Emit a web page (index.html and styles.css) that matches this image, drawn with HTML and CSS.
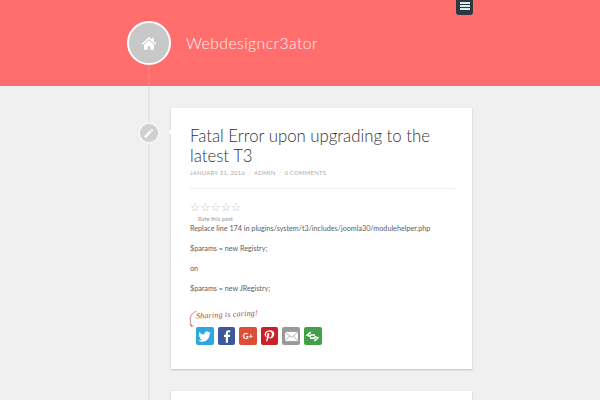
FILE: index.html
```html
<!DOCTYPE html>
<html lang="en">
<head>
<meta charset="utf-8">
<title>Webdesigncr3ator</title>
<link rel="stylesheet" href="styles.css">
</head>
<body>
<header class="site-header">
  <div class="brand">
    <span class="avatar">
      <svg viewBox="0 0 24 24" width="16" height="16"><path fill="#fff" d="M12 3 1 13l1.400 1.500L12 6l9.600 8.500L23 13l-4-3.600V4h-3v2.700z"/><path fill="#fff" d="M12 8 4.500 14.500V22H10v-5h4v5h5.500v-7.500z"/></svg>
    </span>
    <span class="site-name">Webdesigncr3ator</span>
  </div>
  <button class="menu-toggle" aria-label="Menu"><i></i><i></i><i></i></button>
</header>
<main class="timeline">
  <article class="post">
    <span class="post-badge">
      <svg viewBox="0 0 24 24" width="12" height="12"><path fill="#fff" d="M3 17.500V21h3.500L17 10.500 13.500 7zM19.700 7.800a1.500 1.500 0 0 0 0-2.100l-1.400-1.400a1.500 1.500 0 0 0-2.100 0L14.700 5.800l3.500 3.500z"/></svg>
    </span>
    <h1 class="post-title">Fatal Error upon upgrading to the latest T3</h1>
    <div class="post-meta"><span>January 31, 2016</span><em>/</em><span>Admin</span><em>/</em><span>0 Comments</span></div>
    <div class="rating">
      <div class="stars">☆☆☆☆☆</div>
      <div class="rate-label">Rate this post</div>
    </div>
    <p class="first">Replace line 174 in plugins/system/t3/includes/joomla30/modulehelper.php</p>
    <p>$params = new Registry;</p>
    <p>on</p>
    <p>$params = new JRegistry;</p>
    <div class="share">
      <div class="share-note">
        <svg class="arrow" viewBox="0 0 12 30" width="8" height="20"><path d="M11 2C5 4 1 9 2 17c.3 3 1 5 2 7M1 21l3 4 3-2" fill="none" stroke="#b5483c" stroke-width="1"/></svg>
        <span>Sharing is caring!</span>
      </div>
      <div class="share-icons">
        <a class="s-tw"><svg viewBox="0 0 24 24" width="15" height="15"><path fill="#fff" d="M22 5.900c-.7.3-1.500.5-2.400.6.900-.5 1.500-1.300 1.800-2.300-.8.5-1.700.8-2.600 1a4.100 4.100 0 0 0-7 3.700A11.600 11.600 0 0 1 3.400 4.700a4.100 4.100 0 0 0 1.300 5.500c-.7 0-1.300-.2-1.900-.5 0 2 1.400 3.700 3.300 4.100-.6.200-1.200.2-1.800.1.500 1.600 2 2.800 3.800 2.800A8.300 8.300 0 0 1 2 18.400a11.700 11.700 0 0 0 18-10.400c.8-.6 1.500-1.300 2-2.100z"/></svg></a>
        <a class="s-fb"><svg viewBox="0 0 24 24" width="16" height="16"><path fill="#fff" d="M15 22v-8.500h2.800l.4-3.300H15V8.100c0-1 .3-1.600 1.600-1.600h1.700V3.600c-.3 0-1.300-.1-2.400-.1-2.500 0-4.200 1.500-4.200 4.300v2.400H9v3.300h2.700V22z"/></svg></a>
        <a class="s-gp"><span>G+</span></a>
        <a class="s-pi"><svg viewBox="0 0 24 24" width="15" height="15"><path fill="#fff" d="M12.300 2C7 2 4.300 5.600 4.300 8.700c0 1.800.7 3.500 2.200 4.100.3.100.5 0 .6-.3l.2-.9c.1-.3 0-.4-.2-.6-.4-.5-.7-1.100-.7-2 0-2.600 2-4.900 5.100-4.900 2.800 0 4.300 1.700 4.300 4 0 3-1.300 5.500-3.300 5.500-1.100 0-1.900-.9-1.600-2 .3-1.300.9-2.800.9-3.700 0-.9-.5-1.600-1.500-1.600-1.200 0-2.100 1.200-2.100 2.800 0 1 .3 1.700.3 1.700l-1.400 5.900c-.4 1.800-.1 3.900 0 4.100 0 .1.200.2.300.1.100-.2 1.700-2.100 2.200-4l.9-3.300c.4.800 1.600 1.500 2.900 1.500 3.800 0 6.300-3.400 6.300-8C20 5 17 2 12.300 2z"/></svg></a>
        <a class="s-em"><svg viewBox="0 0 24 24" width="17" height="17"><path fill="#fff" d="M3 5.500h18v13H3z"/><path fill="none" stroke="#999" stroke-width="1" d="M3 6l9 7 9-7M3 18l6.500-7M21 18l-6.500-7"/></svg></a>
        <a class="s-mo"><svg viewBox="0 0 24 24" width="15" height="15"><path fill="none" stroke="#fff" stroke-width="2.600" d="M9 5 3.500 10 9 12M15 12l5.500 2L15 19M8 9.500h8M8 14.500h8"/></svg></a>
      </div>
    </div>
  </article>
  <article class="post post-next"></article>
</main>
</body>
</html>
```
FILE: styles.css
```css
* { box-sizing: border-box; }
html, body { margin: 0; height: 400px; overflow: hidden; }
body {
  background: #f0f0f0;
  font-family: "Lato", "Liberation Sans", sans-serif;
  font-size: 9px;
  color: #555;
}
.site-header {
  height: 86px;
  background: #ff6e6c;
  padding: 0 127px;
  display: flex;
  align-items: center;
  position: relative;
}
.site-header::after {
  content: "";
  position: absolute;
  left: 148px;
  top: 65px;
  bottom: 0;
  width: 2px;
  background: rgba(255,255,255,.08);
}
.brand { display: flex; align-items: center; gap: 15px; }
.avatar {
  width: 44px;
  height: 44px;
  border-radius: 50%;
  border: 2px solid #fff;
  background: #c8c8c8;
  display: flex;
  align-items: center;
  justify-content: center;
}
.site-name {
  font-family: "Lato", sans-serif;
  font-weight: 300;
  font-size: 15.700px;
  letter-spacing: 0.450px;
  color: #fff2f2;
}
.menu-toggle {
  position: absolute;
  left: 456px;
  top: -3px;
  width: 17px;
  height: 18px;
  padding: 0;
  border: 0;
  border-radius: 3px;
  background: #2b3a42;
  display: flex;
  flex-direction: column;
  align-items: center;
  justify-content: center;
  gap: 1px;
}
.menu-toggle i { display: block; width: 10px; height: 2px; background: #dfe8ea; }
.timeline {
  position: relative;
  padding: 22px 128px 0 171px;
  display: flex;
  flex-direction: column;
  gap: 22px;
}
.timeline::before {
  content: "";
  position: absolute;
  left: 148px;
  top: 0;
  height: 400px;
  width: 2px;
  background: #e5e5e5;
}
.post {
  position: relative;
  flex: none;
  width: 301px;
  background: #fff;
  height: 261px;
  padding: 18px 18px 0 19px;
  box-shadow: 0 1px 2px rgba(0,0,0,.2);
}
.post-next { height: 60px; }
.post:not(.post-next)::before {
  content: "";
  position: absolute;
  left: -2px;
  top: 22px;
  width: 4px;
  height: 4px;
  border-radius: 50%;
  background: #fff;
}
.post-badge {
  position: absolute;
  left: -33px;
  top: 14px;
  width: 22px;
  height: 22px;
  border-radius: 50%;
  background: #d0d0d0;
  border: 2px solid #f4f4f4;
  display: flex;
  align-items: center;
  justify-content: center;
}
.post-title {
  margin: 0;
  font-family: "Lato", sans-serif;
  font-weight: 300;
  font-size: 16.800px;
  line-height: 19.500px;
  color: #33333a;
}
.post-meta {
  margin-top: 3px;
  height: 21px;
  border-bottom: 1px solid #eee;
  font-size: 6px;
  line-height: 9px;
  letter-spacing: 0.200px;
  text-transform: uppercase;
  color: #aaa;
  width: 265px;
}
.post-meta em { font-style: normal; margin: 0 3px; color: #ddd; }
.rating { margin-top: 12px; }
.stars { font-size: 11.400px; line-height: 12px; color: #c4c4c4; font-family: "DejaVu Sans", sans-serif; }
.rate-label { margin: 2px 0 0 8px; font-size: 5.800px; line-height: 7px; color: #999; }
.post p { margin: 0 0 10px; font-size: 7.200px; line-height: 10px; color: #5e5e5e; }
.post p.first { margin-top: 2px; }
.share { margin-top: 14px; position: relative; }
.share-note { height: 20px; position: relative; padding-left: 6px; }
.share-note span {
  font-family: "Liberation Serif", serif;
  font-style: italic;
  font-size: 8px;
  letter-spacing: 0.200px;
  color: #a8443a;
  display: inline-block;
  transform: rotate(-3deg);
}
.arrow { position: absolute; left: -1px; top: 2px; }
.share-icons { display: flex; gap: 4px; padding-left: 6px; margin-top: -1px; }
.share-icons a {
  width: 17.600px;
  height: 18px;
  border-radius: 2px;
  display: flex;
  align-items: center;
  justify-content: center;
  color: #fff;
  font-size: 8px;
  font-weight: 700;
}
.s-tw { background: #2ca7e0; }
.s-fb { background: #3b5998; }
.s-gp { background: #dc4e35; }
.s-pi { background: #cb2027; }
.s-em { background: #999; }
.s-mo { background: #43a047; }
```
